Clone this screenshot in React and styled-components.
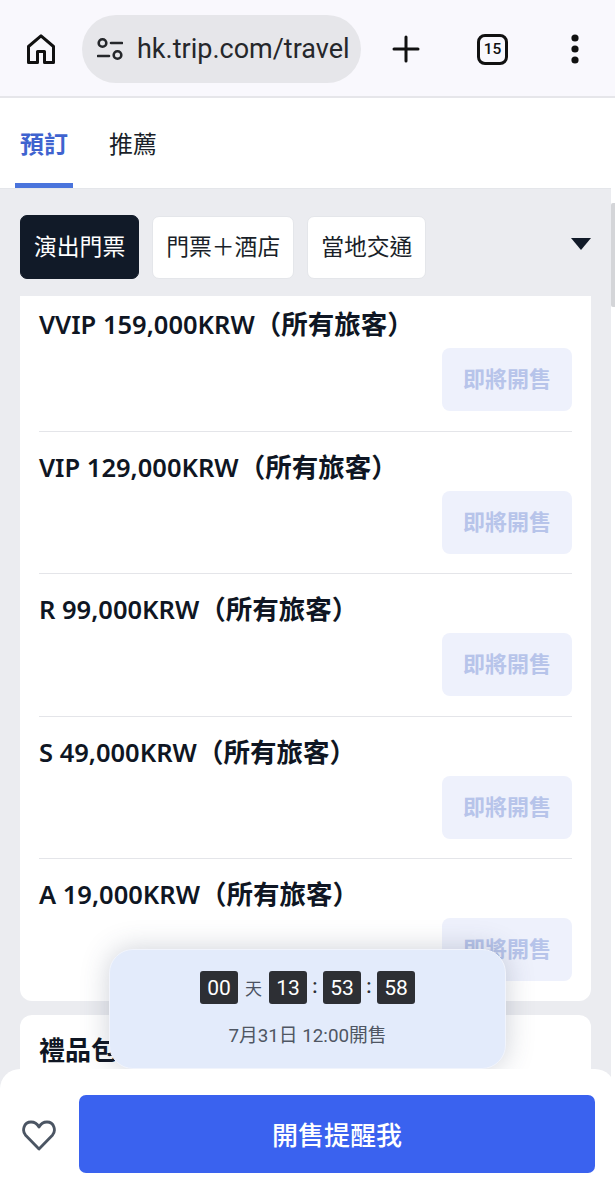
import React from "react";
import styled, { createGlobalStyle } from "styled-components";

const GlobalStyle = createGlobalStyle`
  html, body {
    margin: 0;
    padding: 0;
    background: #fff;
  }
  * {
    box-sizing: border-box;
  }
`;

const FONT = `"Noto Sans", "Noto Sans CJK TC", sans-serif`;

const Page = styled.div`
  position: relative;
  width: 615px;
  height: 1200px;
  overflow: hidden;
  display: flex;
  flex-direction: column;
  font-family: ${FONT};
  color: #0f1623;
`;

const BrowserBar = styled.div`
  height: 98px;
  flex: none;
  display: flex;
  align-items: center;
  padding: 2px 0 0 27px;
  background: #f9f8fd;
  border-bottom: 2px solid #e6e6ea;
`;

const HomeButton = styled.div`
  width: 28px;
  height: 30px;
  flex: none;
  margin-right: 27px;
`;

const UrlPill = styled.div`
  width: 279px;
  height: 68px;
  flex: none;
  display: flex;
  align-items: center;
  padding-left: 15px;
  border-radius: 34px;
  background: #e6e6ea;
  overflow: hidden;
`;

const UrlText = styled.span`
  margin-left: 14px;
  white-space: nowrap;
  font-family: "Roboto", sans-serif;
  font-size: 27px;
  line-height: 36px;
  color: #25272b;
`;

const BarIcon = styled.div`
  flex: none;
  display: flex;
  align-items: center;
  justify-content: center;
  margin-left: ${(p) => p.$left}px;
`;

const TabCount = styled.div`
  width: 31px;
  height: 31px;
  display: flex;
  align-items: center;
  justify-content: center;
  border: 3px solid #111;
  border-radius: 8px;
  font-family: "Roboto", sans-serif;
  font-size: 15.5px;
  font-weight: 500;
  color: #111;
`;

const Tabs = styled.div`
  height: 90px;
  flex: none;
  display: flex;
  background: #fff;
  padding-left: 15px;
  gap: 36px;
`;

const Tab = styled.div`
  width: ${(p) => (p.$active ? "58px" : "auto")};
  height: 90px;
  padding: 28px 0 0 ${(p) => (p.$active ? "5px" : "0")};
  font-size: 24px;
  line-height: 36px;
  font-weight: ${(p) => (p.$active ? 700 : 400)};
  color: ${(p) => (p.$active ? "#3f63cf" : "#1a1f29")};
  border-bottom: 5px solid ${(p) => (p.$active ? "#4a74dc" : "transparent")};
  white-space: nowrap;
`;

const Body = styled.div`
  flex: 1;
  display: flex;
  min-height: 0;
`;

const Content = styled.div`
  width: 611px;
  flex: none;
  padding: 26px 20px 0;
  background: #ebecf0;
  border-top: 1px solid #e4e6ea;
`;

const ScrollTrack = styled.div`
  flex: 1;
  padding-top: 15px;
`;

const ScrollThumb = styled.div`
  height: 104px;
  background: #d4d5d8;
  border-radius: 2px 0 0 2px;
`;

const FilterRow = styled.div`
  display: flex;
  align-items: center;
  gap: 13px;
  height: 64px;
`;

const Pill = styled.div`
  height: ${(p) => (p.$active ? "64px" : "63px")};
  padding: 0 13px 4px;
  display: flex;
  align-items: center;
  border-radius: 7px;
  font-size: 22.8px;
  white-space: nowrap;
  background: ${(p) => (p.$active ? "#111a28" : "#fff")};
  color: ${(p) => (p.$active ? "#fff" : "#1a1f29")};
  border: 1px solid ${(p) => (p.$active ? "#111a28" : "#e4e6ea")};
`;

const Caret = styled.div`
  margin-left: auto;
  margin-top: -7px;
  width: 0;
  height: 0;
  border-left: 10px solid transparent;
  border-right: 10px solid transparent;
  border-top: 12px solid #111a28;
`;

const Card = styled.div`
  width: 571px;
  margin-top: 17px;
  padding: 0 19px;
  background: #fff;
  border-radius: 0 0 12px 12px;
  overflow: hidden;
`;

const Ticket = styled.div`
  padding-bottom: 19.6px;
  border-bottom: 1px solid #e4e5e9;

  &:first-child {
    margin-top: -7px;
  }
  &:last-child {
    border-bottom: none;
  }
`;

const TicketName = styled.div`
  height: 59px;
  padding-top: 17px;
  font-size: 25.5px;
  line-height: 36px;
  font-weight: 600;
  white-space: nowrap;
`;

const TicketAudience = styled.span`
  font-size: 26.5px;
`;

const TicketAction = styled.div`
  display: flex;
  justify-content: flex-end;
`;

const SoonButton = styled.div`
  width: 130px;
  height: 63px;
  padding-bottom: 5px;
  display: flex;
  align-items: center;
  justify-content: center;
  border-radius: 8px;
  background: #eef1fc;
  color: #b7c4ea;
  font-size: 22px;
  font-weight: 700;
`;

const GiftCard = styled.div`
  width: 571px;
  height: 200px;
  margin-top: 14px;
  padding: 15px 19px;
  background: #fff;
  border-radius: 12px;
  font-size: 26px;
  line-height: 40px;
  font-weight: 700;
`;

const Countdown = styled.div`
  position: absolute;
  left: 109px;
  top: 949px;
  width: 397px;
  height: 120px;
  padding-top: 21px;
  display: flex;
  flex-direction: column;
  align-items: center;
  background: #e3ebfb;
  border: 1px solid #f1f4fc;
  border-radius: 24px;
  box-shadow: 0 0 28px rgba(60, 70, 100, 0.25);
`;

const Clock = styled.div`
  display: flex;
  align-items: center;
  height: 33px;
`;

const ClockBox = styled.div`
  width: 38px;
  height: 33px;
  display: flex;
  align-items: center;
  justify-content: center;
  border-radius: 3px;
  background: #2d2f34;
  color: #fff;
  font-family: "Roboto", sans-serif;
  font-size: 21px;
`;

const ClockUnit = styled.span`
  width: 31px;
  text-align: center;
  font-size: 17px;
  color: #4b5261;
`;

const ClockColon = styled.span`
  width: 16px;
  margin-top: -3px;
  text-align: center;
  font-family: "Roboto", sans-serif;
  font-size: 20px;
  font-weight: 500;
  color: #2d2f34;
`;

const SaleDate = styled.div`
  margin-top: 19px;
  font-family: "Roboto", "Noto Sans CJK TC", sans-serif;
  font-size: 18.8px;
  line-height: 26px;
  color: #4f5663;
`;

const BottomBar = styled.div`
  position: absolute;
  left: 0;
  right: 0;
  bottom: 0;
  height: 131px;
  display: flex;
  align-items: flex-start;
  padding: 26px 20px 0 22px;
  gap: 23px;
  background: #fff;
  border-radius: 20px 20px 0 0;
`;

const Heart = styled.div`
  width: 34px;
  height: 31px;
  margin-top: 25px;
  flex: none;
`;

const RemindButton = styled.div`
  flex: 1;
  height: 78px;
  display: flex;
  align-items: center;
  justify-content: center;
  border-radius: 7px;
  background: #3a62ef;
  color: #fff;
  font-size: 26px;
  font-weight: 500;
`;

const tickets = [
  "VVIP 159,000KRW",
  "VIP 129,000KRW",
  "R 99,000KRW",
  "S 49,000KRW",
  "A 19,000KRW",
];

const HomeIcon = () => (
  <svg width="28" height="30" viewBox="0 0 28 30" fill="none" stroke="#111" strokeWidth="3" strokeLinejoin="round">
    <path d="M1.5 28.5V12.5L14 1.8l12.5 10.7v16h-9V17.5h-7v11h-9z" />
  </svg>
);

const SiteIcon = () => (
  <svg width="26" height="24" viewBox="0 0 26 24" fill="none" stroke="#25272b" strokeWidth="2.6" strokeLinecap="round">
    <circle cx="5.5" cy="6" r="3.8" />
    <path d="M14 6h11M1 19h11" />
    <circle cx="20.5" cy="18" r="3.8" />
  </svg>
);

const PlusIcon = () => (
  <svg width="28" height="28" viewBox="0 0 28 28" stroke="#111" strokeWidth="3" strokeLinecap="round">
    <path d="M14 2v24M2 14h24" />
  </svg>
);

const DotsIcon = () => (
  <svg width="10" height="30" viewBox="0 0 10 30" fill="#111">
    <circle cx="5" cy="4" r="3.6" />
    <circle cx="5" cy="15" r="3.6" />
    <circle cx="5" cy="26" r="3.6" />
  </svg>
);

const HeartIcon = () => (
  <svg width="34" height="31" viewBox="0 0 34 31" fill="none" stroke="#4b5563" strokeWidth="2.8" strokeLinejoin="round">
    <path d="M17 29L3.6 15.2C-.2 11 1.6 2 9 2c3.6 0 6.4 2 8 5 1.6-3 4.4-5 8-5 7.4 0 9.2 9 5.4 13.2L17 29z" />
  </svg>
);

export default function App() {
  return (
    <Page>
      <GlobalStyle />
      <BrowserBar>
        <HomeButton>
          <HomeIcon />
        </HomeButton>
        <UrlPill>
          <SiteIcon />
          <UrlText>hk.trip.com/travel</UrlText>
        </UrlPill>
        <BarIcon $left={31}>
          <PlusIcon />
        </BarIcon>
        <BarIcon $left={57}>
          <TabCount>15</TabCount>
        </BarIcon>
        <BarIcon $left={62}>
          <DotsIcon />
        </BarIcon>
      </BrowserBar>
      <Tabs>
        <Tab $active>預訂</Tab>
        <Tab>推薦</Tab>
      </Tabs>
      <Body>
        <Content>
          <FilterRow>
            <Pill $active>演出門票</Pill>
            <Pill>門票＋酒店</Pill>
            <Pill>當地交通</Pill>
            <Caret />
          </FilterRow>
          <Card>
            {tickets.map((name) => (
              <Ticket key={name}>
                <TicketName>
                  {name}
                  <TicketAudience>（所有旅客）</TicketAudience>
                </TicketName>
                <TicketAction>
                  <SoonButton>即將開售</SoonButton>
                </TicketAction>
              </Ticket>
            ))}
          </Card>
          <GiftCard>禮品包</GiftCard>
        </Content>
        <ScrollTrack>
          <ScrollThumb />
        </ScrollTrack>
      </Body>
      <Countdown>
        <Clock>
          <ClockBox>00</ClockBox>
          <ClockUnit>天</ClockUnit>
          <ClockBox>13</ClockBox>
          <ClockColon>:</ClockColon>
          <ClockBox>53</ClockBox>
          <ClockColon>:</ClockColon>
          <ClockBox>58</ClockBox>
        </Clock>
        <SaleDate>7月31日 12:00開售</SaleDate>
      </Countdown>
      <BottomBar>
        <Heart>
          <HeartIcon />
        </Heart>
        <RemindButton>開售提醒我</RemindButton>
      </BottomBar>
    </Page>
  );
}
